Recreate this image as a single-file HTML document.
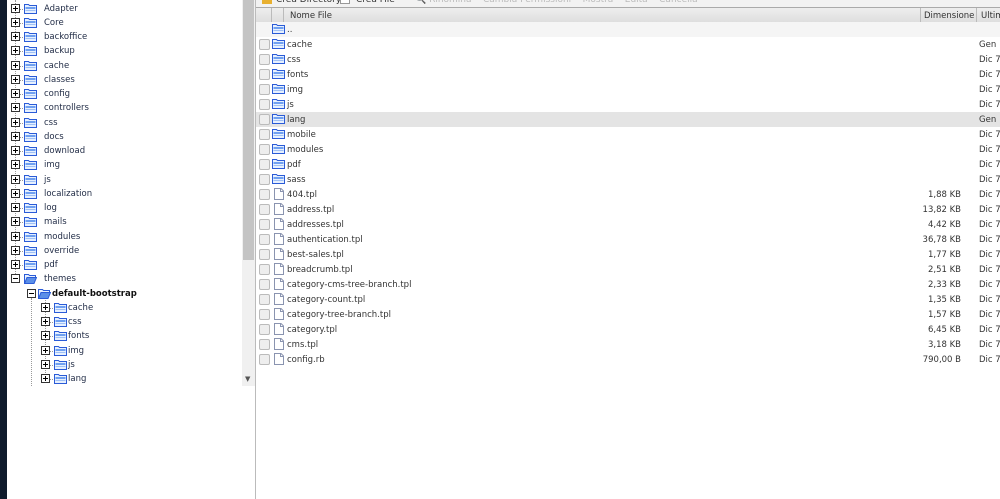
<!DOCTYPE html>
<html><head><meta charset="utf-8"><style>
*{margin:0;padding:0;box-sizing:border-box}
body{width:1000px;height:499px;overflow:hidden;background:#fff;position:relative;font-family:"DejaVu Sans","Liberation Sans",sans-serif;font-size:8.5px}
.a{position:absolute;white-space:nowrap}
.strip{left:0;top:0;width:7px;height:499px;background:#0f1b2c}
.vl{position:absolute;border-left:1px dotted #999;width:0}
.pb{position:absolute;width:9px;height:9px;border:1px solid #333;background:#fff}
.pb:before{content:"";position:absolute;left:1px;top:3px;width:5px;height:1px;background:#000}
.pb.p:after{content:"";position:absolute;left:3px;top:1px;width:1px;height:5px;background:#000}
.hl{position:absolute;border-top:1px dotted #999;width:5px}
.fd{position:absolute;width:13px;height:10px}
.tx{position:absolute;color:#1f2a44;line-height:10px;white-space:nowrap}
.row{position:absolute;left:256px;width:744px;height:15px}
.cb{position:absolute;left:3px;top:2px;width:11px;height:11px;border:1px solid #bbb;border-radius:2px;background:#eee}
.ic{position:absolute;left:16px;top:1px}
.nm,.sz,.dt{position:absolute;top:3px;color:#333;line-height:11px;white-space:nowrap}
.nm{left:31px}
.sz{right:39px}
.dt{left:723px}
</style></head><body>
<div class="a strip"></div>
<svg width="0" height="0" style="position:absolute"><defs>
<symbol id="f" viewBox="0 0 13 10"><path d="M0.5 9.5V0.5H4.5L5.5 1.5H12.5V9.5Z" fill="#e6f0ff" stroke="#2a5bd7"/><rect x="1.5" y="3" width="10" height="2" fill="#6fa0f0"/><rect x="1.5" y="6" width="10" height="1" fill="#9fc0f5"/></symbol>
<symbol id="o" viewBox="0 0 13 10"><path d="M0.5 9.5V0.5H4.5L5.5 1.5H11.5V3.5" fill="#e6f0ff" stroke="#2a5bd7"/><path d="M0.5 9.5L3 3.5H12.5L10 9.5Z" fill="#5b8fe8" stroke="#2a5bd7"/></symbol>
<symbol id="p" viewBox="0 0 10 12"><path d="M0.5 0.5H7L9.5 3V11.5H0.5Z" fill="#fff" stroke="#8a94b0"/><path d="M6.5 0.5V3.5H9.5" fill="none" stroke="#8a94b0"/></symbol>
</defs></svg>

<div class="vl" style="left:15px;top:0;height:280px"></div>
<div class="vl" style="left:31px;top:298px;height:88px"></div>
<div class="vl" style="left:45px;top:298px;height:83px"></div>
<div id="tree"></div>

<div class="a" style="left:242px;top:0;width:13px;height:386px;background:#f0f0f0"></div>
<div class="a" style="left:243px;top:0;width:11px;height:260px;background:#c4c4c4"></div>
<div class="a" style="left:245px;top:375px;font-size:7px;color:#555">▼</div>
<div class="a" style="left:255px;top:0;width:1px;height:499px;background:#bbb"></div>

<div class="a" style="left:256px;top:0;width:744px;height:8px;background:#f2f2f2;border-bottom:1px solid #aaa"></div>
<div class="a" style="left:262px;top:-4px;width:10px;height:8px;background:#e8b030"></div>
<div class="a" style="left:276px;top:-5px;color:#333;font-size:9px">Crea Directory</div>
<div class="a" style="left:340px;top:-5px;width:10px;height:9px;background:#fff;border:1px solid #999"></div>
<div class="a" style="left:356px;top:-5px;color:#333;font-size:9px">Crea File</div>
<div class="a" style="left:415px;top:-5px;color:#bbb;font-size:9px">🔍 Rinomina &nbsp;&nbsp; Cambia Permissioni &nbsp;&nbsp; Mostra &nbsp;&nbsp; Edita &nbsp;&nbsp; Cancella</div>

<div class="a" style="left:256px;top:8px;width:744px;height:16px;background:linear-gradient(#eee,#ddd);border-bottom:1px solid #aaa"></div>
<div class="a" style="left:271px;top:8px;width:1px;height:16px;background:#bbb"></div>
<div class="a" style="left:283px;top:8px;width:1px;height:16px;background:#bbb"></div>
<div class="a" style="left:920px;top:8px;width:1px;height:16px;background:#bbb"></div>
<div class="a" style="left:976px;top:8px;width:1px;height:16px;background:#bbb"></div>
<div class="a" style="left:290px;top:11px;color:#333">Nome File</div>
<div class="a" style="left:924px;top:11px;color:#333">Dimensione</div>
<div class="a" style="left:981px;top:11px;color:#333">Ultim</div>
<div id="rows"></div>

<script>
var t=["Adapter","Core","backoffice","backup","cache","classes","config","controllers","css","docs","download","img","js","localization","log","mails","modules","override","pdf"];
var h="";
function y(i){return Math.round(3.5+i*14.25);}
t.forEach(function(e,i){var Y=y(i);
h+='<div class="pb p" style="left:11px;top:'+Y+'px"></div><div class="hl" style="left:20px;top:'+(Y+5)+'px"></div><svg class="fd" style="left:24px;top:'+Y+'px"><use href="#f"/></svg><div class="tx" style="left:44px;top:'+Y+'px">'+e+'</div>';});
var Y=y(19);
h+='<div class="pb" style="left:11px;top:'+Y+'px"></div><svg class="fd" style="left:24px;top:'+Y+'px"><use href="#o"/></svg><div class="tx" style="left:44px;top:'+Y+'px">themes</div>';
Y=y(20);
h+='<div class="pb" style="left:27px;top:'+Y+'px"></div><svg class="fd" style="left:38px;top:'+Y+'px"><use href="#o"/></svg><div class="tx" style="left:52px;top:'+Y+'px;font-weight:bold;color:#111">default-bootstrap</div>';
["cache","css","fonts","img","js","lang"].forEach(function(n,k){Y=y(21+k);
h+='<div class="pb p" style="left:41px;top:'+Y+'px"></div><div class="hl" style="left:50px;top:'+(Y+5)+'px"></div><svg class="fd" style="left:54px;top:'+Y+'px"><use href="#f"/></svg><div class="tx" style="left:68px;top:'+Y+'px">'+n+'</div>';});
document.getElementById("tree").innerHTML=h;
var r=[["..","d","",""],["cache","d","","Gen"],["css","d","","Dic 7"],["fonts","d","","Dic 7"],["img","d","","Dic 7"],["js","d","","Dic 7"],["lang","d","","Gen"],["mobile","d","","Dic 7"],["modules","d","","Dic 7"],["pdf","d","","Dic 7"],["sass","d","","Dic 7"],
["404.tpl","f","1,88 KB","Dic 7"],["address.tpl","f","13,82 KB","Dic 7"],["addresses.tpl","f","4,42 KB","Dic 7"],["authentication.tpl","f","36,78 KB","Dic 7"],["best-sales.tpl","f","1,77 KB","Dic 7"],["breadcrumb.tpl","f","2,51 KB","Dic 7"],["category-cms-tree-branch.tpl","f","2,33 KB","Dic 7"],["category-count.tpl","f","1,35 KB","Dic 7"],["category-tree-branch.tpl","f","1,57 KB","Dic 7"],["category.tpl","f","6,45 KB","Dic 7"],["cms.tpl","f","3,18 KB","Dic 7"],["config.rb","f","790,00 B","Dic 7"]];
h="";
r.forEach(function(e,i){var top=22+i*15;var bg=i==0?"#f5f5f5":(i==6?"#e4e4e4":"transparent");
h+='<div class="row" style="top:'+top+'px;background:'+bg+'">'+(i==0?'':'<div class="cb"></div>')+
(e[1]=="d"?'<svg class="ic" width="13" height="10" style="top:2px"><use href="#f"/></svg>':'<svg class="ic" width="10" height="12" style="left:18px"><use href="#p"/></svg>')+
'<div class="nm">'+e[0]+'</div><div class="sz">'+e[2]+'</div><div class="dt">'+e[3]+'</div></div>';});
document.getElementById("rows").innerHTML=h;
</script>
</body></html>
